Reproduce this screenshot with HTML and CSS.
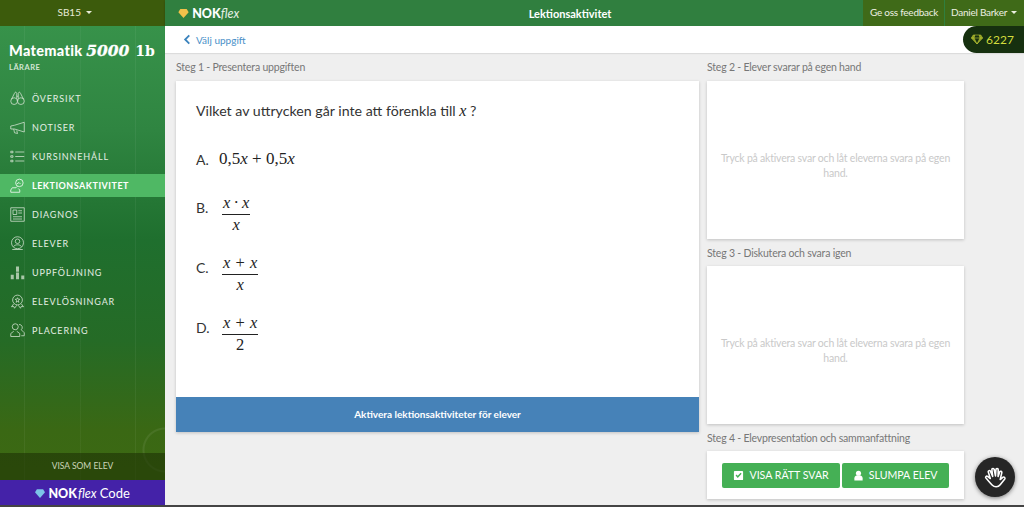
FILE: index.html
```html
<!DOCTYPE html>
<html lang="sv">
<head>
    <meta charset="UTF-8">
    <title>Lektionsaktivitet</title>
    <link rel="stylesheet" href="styles.css">
</head>
<body>
    <div class="app">
        <aside class="sidebar">
            <div class="school">SB15 <span class="caret"></span></div>
            <div class="course">
                <div class="course-name">Matematik <i>5000</i> <b>1b</b></div>
                <div class="course-role">LÄRARE</div>
            </div>
            <nav class="menu">
                <a class="menu-item">
                    <svg viewBox="0 0 20 20"><circle cx="5.500" cy="13.500" r="4.500"/><circle cx="14.500" cy="13.500" r="4.500"/><path d="M2 11 6 3c1-2 2-2 3 0v7M18 11 14 3c-1-2-2-2-3 0v7M9 7h2M9 12h2"/></svg>
                    ÖVERSIKT
                </a>
                <a class="menu-item">
                    <svg viewBox="0 0 20 20"><path d="M19 3v13L6 12H1V8l5-1zM5 12l1 5 4 1-1-4"/></svg>
                    NOTISER
                </a>
                <a class="menu-item">
                    <svg viewBox="0 0 20 20"><path d="M7 4h12M7 10h12M7 16h12"/><path d="M1 3h3v2H1zM1 9h3v2H1zM1 15h3v2H1z"/></svg>
                    KURSINNEHÅLL
                </a>
                <a class="menu-item active">
                    <svg viewBox="0 0 20 20"><circle cx="12.500" cy="6.500" r="5"/><path d="M10 11 8 13H3l-2 3v3h12v-3l-2-2M9 8l3-2 2 2"/></svg>
                    LEKTIONSAKTIVITET
                </a>
                <a class="menu-item">
                    <svg viewBox="0 0 20 20"><path d="M1 1h18v18H1zM4 4h5v6H4zM11 5h5M11 8h5M4 13h12M4 16h12"/></svg>
                    DIAGNOS
                </a>
                <a class="menu-item">
                    <svg viewBox="0 0 20 20"><circle cx="10" cy="9" r="8"/><circle cx="10" cy="7" r="3"/><path d="M5 14c1-3 9-3 10 0M3 18h14"/></svg>
                    ELEVER
                </a>
                <a class="menu-item">
                    <svg class="solid" viewBox="0 0 20 20"><path d="M1 13h4v6H1zM8 2h4v7H8zM8 10h4v9H8zM15 14h4v5h-4z"/></svg>
                    UPPFÖLJNING
                </a>
                <a class="menu-item">
                    <svg viewBox="0 0 20 20"><circle cx="10" cy="8" r="6.500"/><path d="m10 5 1 2h2l-2 2 1 2-2-1-2 1 1-2-2-2h2zM5 13l-3 4 3-.5 1 2.500 3-4M15 13l3 4-3-.5-1 2.500-3-4"/></svg>
                    ELEVLÖSNINGAR
                </a>
                <a class="menu-item">
                    <svg viewBox="0 0 20 20"><circle cx="7" cy="5" r="4"/><path d="M1 18v-4l4-3M9 11l4 3v4H1M12 2a4 4 0 0 1 3 7l4 4v4h-4"/></svg>
                    PLACERING
                </a>
            </nav>
            <div class="view-as">VISA SOM ELEV</div>
            <div class="code-link">
                <svg class="gem" viewBox="0 0 16 14"><path d="M3 0h10l3 5-8 9-8-9z"/></svg>
                <b>NOK</b><i>flex</i> <span>Code</span>
            </div>
        </aside>

        <div class="main">
            <header class="topbar">
                <div class="brand">
                    <svg class="gem" viewBox="0 0 16 14"><path d="M3 0h10l3 5-8 9-8-9z"/></svg>
                    <b>NOK</b><i>flex</i>
                </div>
                <div class="page-title">Lektionsaktivitet</div>
                <a class="top-link feedback">Ge oss feedback</a>
                <a class="top-link user">Daniel Barker <span class="caret"></span></a>
            </header>
            <div class="subbar">
                <svg class="back" viewBox="0 0 8 12"><path d="M6.500 1.500 2 6l4.500 4.500"/></svg>
                Välj uppgift
            </div>
            <div class="points">
                <svg viewBox="0 0 16 14"><path d="M3 1h10l2.500 4L8 13 .5 5zM.5 5h15M5 1 4 5l4 8 4-8-1-4"/></svg>
                6227
            </div>

            <div class="content">
                <section class="left-col">
                    <h2 class="step">Steg 1 - Presentera uppgiften</h2>
                    <div class="card task">
                        <div class="task-body">
                            <p class="question">Vilket av uttrycken går inte att förenkla till <span class="math x">x</span> ?</p>
                            <div class="option single">
                                <span class="letter">A.</span>
                                <span class="math expr">0,5<em>x</em> + 0,5<em>x</em></span>
                            </div>
                            <div class="option">
                                <span class="letter">B.</span>
                                <span class="math frac"><span class="num tight"><em>x</em> · <em>x</em></span><span class="den"><em>x</em></span></span>
                            </div>
                            <div class="option">
                                <span class="letter">C.</span>
                                <span class="math frac"><span class="num"><em>x</em> + <em>x</em></span><span class="den"><em>x</em></span></span>
                            </div>
                            <div class="option">
                                <span class="letter">D.</span>
                                <span class="math frac"><span class="num"><em>x</em> + <em>x</em></span><span class="den">2</span></span>
                            </div>
                        </div>
                        <div class="activate">Aktivera lektionsaktiviteter för elever</div>
                    </div>
                </section>

                <section class="right-col">
                    <h2 class="step">Steg 2 - Elever svarar på egen hand</h2>
                    <div class="card hint">Tryck på aktivera svar och låt eleverna svara på egen hand.</div>
                    <h2 class="step">Steg 3 - Diskutera och svara igen</h2>
                    <div class="card hint">Tryck på aktivera svar och låt eleverna svara på egen hand.</div>
                    <h2 class="step">Steg 4 - Elevpresentation och sammanfattning</h2>
                    <div class="card actions">
                        <button class="btn">
                            <svg viewBox="0 0 12 12"><path fill-rule="evenodd" d="M2 1h8a1 1 0 0 1 1 1v8a1 1 0 0 1-1 1H2a1 1 0 0 1-1-1V2a1 1 0 0 1 1-1zm.800 5 2.400 2.600L9.400 4 8.300 3 5.200 6.300 3.800 5z"/></svg>
                            VISA RÄTT SVAR
                        </button>
                        <button class="btn">
                            <svg viewBox="0 0 12 12"><circle cx="6" cy="3.500" r="2.800"/><path d="M1.500 11.500V9c0-2 1.500-3 2.500-3h4c1 0 2.500 1 2.500 3v2.500z"/></svg>
                            SLUMPA ELEV
                        </button>
                    </div>
                </section>
            </div>
        </div>
    </div>

    <div class="hand">
        <svg viewBox="0 0 24 24"><path d="M7 13 5 6.500a1.100 1.100 0 0 1 2-.7L9.300 11 8.500 4.500a1.100 1.100 0 0 1 2.200-.2L12 10.500l.4-6a1.100 1.100 0 0 1 2.200.1L14.500 11l1.600-4.500a1.100 1.100 0 0 1 2 .7L16.500 14l2.800-2.300a1.200 1.200 0 0 1 1.600 1.700L16.500 19c-2 2.500-5.500 2.500-7.500.5C7 17.500 5 15 2.800 12.500a1.100 1.100 0 0 1 1.600-1.500z"/></svg>
    </div>
</body>
</html>
```

FILE: styles.css
```css
* {
    box-sizing: border-box;
}
html, body {
    height: 100%;
}
body {
    margin: 0;
    font-family: 'Lato', sans-serif;
    background: #efefef;
    color: #333;
    overflow: hidden;
}
.app {
    display: flex;
    height: 505px;
}
body::after {
    content: "";
    display: block;
    height: 2px;
    background: #444;
}

/* sidebar */
.sidebar {
    width: 165px;
    flex: none;
    display: flex;
    flex-direction: column;
    color: #fff;
    background:
        linear-gradient(90deg, transparent 24px, rgba(255,255,255,.05) 24px, rgba(255,255,255,.05) 25px, transparent 25px),
        linear-gradient(90deg, transparent 80px, rgba(255,255,255,.04) 80px, rgba(255,255,255,.04) 81px, transparent 81px),
        linear-gradient(90deg, transparent 135px, rgba(255,255,255,.05) 135px, rgba(255,255,255,.05) 136px, transparent 136px),
        radial-gradient(circle at 165px 450px, transparent 20px, rgba(255,255,255,.07) 21px, rgba(255,255,255,.07) 22px, transparent 23px),
        linear-gradient(180deg, #37924a 26px, #2f8541 130px, #1f6f2e 240px, #256b26 340px, #3a6814 430px, #3e6a12 100%);
}
.school {
    height: 26px;
    background: #3c5b0c;
    font-size: 10px;
    line-height: 25px;
    text-align: center;
    color: #e8ecd8;
    padding-right: 16px;
}
.caret {
    display: inline-block;
    border-top: 3px solid currentColor;
    border-left: 3px solid transparent;
    border-right: 3px solid transparent;
    vertical-align: 2px;
    margin-left: 2px;
}
.course {
    padding: 16px 0 0 9px;
    height: 58px;
}
.course-name {
    font-size: 14.500px;
    font-weight: 900;
    letter-spacing: .3px;
    white-space: nowrap;
    line-height: 17px;
}
.course-name i, .course-name b {
    font-family: 'DejaVu Serif', serif;
    font-weight: 700;
    letter-spacing: 0;
}
.course-name i {
    font-size: 15.500px;
    -webkit-text-stroke: .3px #fff;
}
.course-name b {
    font-size: 14px;
    margin-left: 2px;
}
.course-role {
    font-size: 7.500px;
    font-weight: 700;
    letter-spacing: .5px;
    color: #d4e6d4;
    margin-top: 3px;
}
.menu {
    flex: 1;
}
.menu-item {
    display: flex;
    align-items: center;
    gap: 7px;
    height: 29px;
    padding-left: 10px;
    font-size: 9px;
    letter-spacing: .85px;
    color: #e4eee4;
}
.menu-item svg {
    width: 15px;
    height: 15px;
    flex: none;
    fill: none;
    stroke: #d8e6d6;
    stroke-width: 1;
}
.menu-item svg.solid {
    fill: #a9c7a8;
    stroke: none;
}
.menu-item.active {
    background: #4fb864;
    color: #fff;
    font-weight: 700;
    letter-spacing: .5px;
    height: 23px;
    margin: 3px 0;
}
.menu-item.active svg {
    stroke: #fff;
}
.view-as {
    height: 27px;
    background: rgba(30, 50, 5, .6);
    font-size: 8.500px;
    line-height: 27px;
    text-align: center;
    color: #ccd6bc;
}
.code-link {
    height: 25px;
    background: #4422a8;
    font-size: 12.500px;
    line-height: 26px;
    text-align: center;
    white-space: nowrap;
}
.code-link b {
    font-weight: 900;
}
.code-link i {
    margin-left: 1px;
}
.code-link span {
    font-size: 13px;
}
.code-link .gem {
    width: 10px;
    height: 9px;
    fill: #7cc4e8;
}

/* top */
.main {
    flex: 1;
    position: relative;
    min-width: 0;
    display: flex;
    flex-direction: column;
}
.topbar {
    height: 26px;
    flex: none;
    display: flex;
    align-items: center;
    background: #307f3f;
    color: #fff;
    box-shadow: 0 1px 2px rgba(0, 0, 0, .25);
}
.brand {
    flex: none;
    width: 328px;
    padding-left: 13px;
    font-size: 12.500px;
    color: #fff;
}
.brand b {
    font-weight: 900;
}
.brand i {
    color: #e6f0e6;
}
.brand .gem {
    width: 11px;
    height: 9px;
    fill: #f2c14a;
}
.page-title {
    flex: none;
    width: 154px;
    margin-right: 216px;
    text-align: center;
    font-size: 11px;
    font-weight: 700;
}
.top-link {
    height: 26px;
    line-height: 25px;
    background: #3f6a18;
    font-size: 10px;
    letter-spacing: -.25px;
    color: #edf0e2;
    white-space: nowrap;
}
.top-link.feedback {
    flex: none;
    width: 81px;
    padding-left: 7px;
}
.top-link.user {
    flex: 1;
    margin-left: 1px;
    padding-left: 6px;
}
.subbar {
    height: 27px;
    flex: none;
    background: #fff;
    display: flex;
    align-items: center;
    padding-left: 18px;
    font-size: 10px;
    color: #4a90c8;
    box-shadow: 0 1px 1px rgba(0, 0, 0, .08);
}
.back {
    width: 8px;
    height: 11px;
    margin-right: 5px;
    fill: none;
    stroke: #3b83bd;
    stroke-width: 2;
}
.points {
    position: absolute;
    top: 26px;
    right: 0;
    width: 61px;
    height: 27px;
    display: flex;
    align-items: center;
    gap: 3px;
    padding-left: 8px;
    background: #16300f;
    border-radius: 14px 0 0 14px;
    color: #d2dc3c;
    font-size: 12px;
}
.points svg {
    width: 12px;
    height: 11px;
    fill: #8a9a20;
    stroke: #c3cf38;
    stroke-width: .8;
}

/* content */
.content {
    display: flex;
    gap: 8px;
    padding-left: 11px;
}
.left-col {
    width: 523px;
    flex: none;
}
.right-col {
    width: 257px;
    flex: none;
}
.step {
    margin: 0;
    height: 28px;
    padding-top: 8px;
    line-height: 13px;
    font-size: 10.500px;
    letter-spacing: -.2px;
    font-weight: 400;
    color: #777;
    white-space: nowrap;
}
.card {
    background: #fff;
    box-shadow: 0 1px 3px rgba(0, 0, 0, .2);
}
.task {
    height: 351px;
    display: flex;
    flex-direction: column;
}
.task-body {
    flex: 1;
    padding: 20px 20px 0;
}
.question {
    margin: 0 0 22px;
    font-size: 14.200px;
    line-height: 20px;
    color: #333;
}
.math {
    font-family: 'Liberation Serif', serif;
    color: #222;
}
.math em, .math.x {
    font-style: italic;
}
.math.x {
    font-size: 16px;
}
.option {
    display: flex;
    align-items: center;
    height: 60px;
    font-size: 14px;
}
.option.single {
    height: 32px;
    margin-bottom: 8px;
}
.letter {
    width: 23px;
    flex: none;
}
.option:not(.single) .letter {
    margin-bottom: 12px;
}
.expr {
    font-size: 17px;
    white-space: nowrap;
}
.frac {
    display: inline-flex;
    flex-direction: column;
    align-items: stretch;
    text-align: center;
    margin-left: 3px;
    font-size: 16.500px;
    line-height: 21px;
}
.num {
    border-bottom: 1px solid #222;
    padding: 0 1px 1px;
    white-space: nowrap;
    word-spacing: 1px;
}
.num.tight {
    word-spacing: -1px;
}
.den {
    line-height: 20px;
}
.activate {
    height: 35px;
    background: #4682b8;
    color: #fff;
    text-align: center;
    font-size: 10px;
    font-weight: 700;
    line-height: 35px;
}
.hint {
    height: 158px;
    padding: 70px 10px 0;
    text-align: center;
    font-size: 10.500px;
    letter-spacing: -.2px;
    line-height: 15px;
    color: #c9c9c9;
}
.right-col .hint + .step {
    height: 27px;
    padding-top: 8px;
}
.actions {
    height: 48px;
    display: flex;
    justify-content: center;
    align-items: center;
    gap: 2px;
}
.btn {
    height: 25px;
    padding: 0 11px;
    border: none;
    border-radius: 2px;
    background: #45b055;
    color: #fff;
    font-family: inherit;
    font-size: 10.600px;
    display: flex;
    align-items: center;
    gap: 5px;
    white-space: nowrap;
}
.btn svg {
    width: 11px;
    height: 11px;
    fill: #fff;
}

/* hand button */
.hand {
    position: fixed;
    left: 975px;
    top: 457px;
    width: 40px;
    height: 40px;
    border-radius: 50%;
    background: #262626;
    box-shadow: 0 1px 4px rgba(0, 0, 0, .5);
    display: flex;
    align-items: center;
    justify-content: center;
}
.hand svg {
    width: 25px;
    height: 25px;
    fill: none;
    stroke: #fff;
    stroke-width: 1.500;
    stroke-linejoin: round;
}
```
